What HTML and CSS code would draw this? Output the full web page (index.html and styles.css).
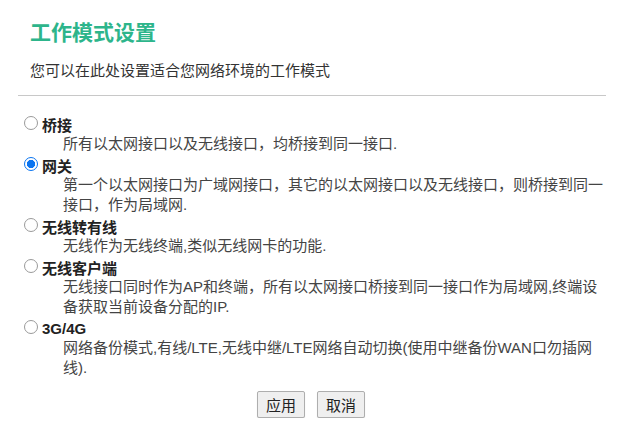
FILE: index.html
```html
<!DOCTYPE html>
<html lang="zh-CN">
<head>
<meta charset="utf-8">
<title>工作模式设置</title>
<link rel="stylesheet" href="styles.css">
</head>
<body>
<div class="page">
  <div class="head">
    <h1 class="title">工作模式设置</h1>
    <p class="subtitle">您可以在此处设置适合您网络环境的工作模式</p>
  </div>
  <hr class="rule">
  <form class="options">
    <div class="option">
      <label class="opt-label"><input type="radio" name="mode" class="radio"><span>桥接</span></label>
      <div class="desc">所有以太网接口以及无线接口，均桥接到同一接口.</div>
    </div>
    <div class="option">
      <label class="opt-label"><input type="radio" name="mode" class="radio" checked><span>网关</span></label>
      <div class="desc">第一个以太网接口为广域网接口，其它的以太网接口以及无线接口，则桥接到同一接口，作为局域网.</div>
    </div>
    <div class="option">
      <label class="opt-label"><input type="radio" name="mode" class="radio"><span>无线转有线</span></label>
      <div class="desc">无线作为无线终端,类似无线网卡的功能.</div>
    </div>
    <div class="option">
      <label class="opt-label"><input type="radio" name="mode" class="radio"><span>无线客户端</span></label>
      <div class="desc">无线接口同时作为AP和终端，所有以太网接口桥接到同一接口作为局域网,终端设备获取当前设备分配的IP.</div>
    </div>
    <div class="option">
      <label class="opt-label"><input type="radio" name="mode" class="radio"><span>3G/4G</span></label>
      <div class="desc">网络备份模式,有线/LTE,无线中继/LTE网络自动切换(使用中继备份WAN口勿插网线).</div>
    </div>
    <div class="actions">
      <button type="button" class="btn">应用</button>
      <button type="button" class="btn">取消</button>
    </div>
  </form>
</div>
</body>
</html>
```

FILE: styles.css
```css
html, body {
  margin: 0;
  padding: 0;
  background: #ffffff;
}

body {
  font-family: "Liberation Sans", "Noto Sans CJK SC", sans-serif;
  color: #333333;
}

.page {
  padding: 19px 34px 0 18px;
}

.head {
  padding-left: 12px;
}

.title {
  margin: 0;
  font-size: 21px;
  line-height: 28px;
  font-weight: bold;
  color: #2db58b;
}

.subtitle {
  margin: 12px 0 0 0;
  font-size: 15px;
  line-height: 24px;
  color: #333333;
}

.rule {
  margin: 12px 0 0 0;
  border: 0;
  border-top: 1px solid #c8c8c8;
  height: 0;
}

.options {
  margin: 18px 0 0 0;
  padding-right: 2px;
}

.option {
  margin-bottom: 1px;
}

.opt-label {
  display: flex;
  align-items: center;
  height: 20px;
  font-size: 15px;
  font-weight: bold;
  color: #222222;
}

.radio {
  appearance: none;
  -webkit-appearance: none;
  box-sizing: border-box;
  width: 14px;
  height: 14px;
  margin: 0 4px 3px 6px;
  flex: none;
  border: 1px solid #9a9a9a;
  border-radius: 50%;
  background: #ffffff;
}

.radio:checked {
  border: 1.5px solid #0a74f0;
  background: radial-gradient(circle, #0a74f0 0 3.9px, #ffffff 4.4px);
}

.desc {
  padding-left: 45px;
  font-size: 15px;
  line-height: 20px;
  color: #444444;
}

.actions {
  display: flex;
  justify-content: center;
  gap: 12px;
  margin-top: 13px;
}

.btn {
  height: 27px;
  width: 48px;
  padding: 0;
  font-family: "Liberation Sans", "Noto Sans CJK SC", sans-serif;
  font-size: 15px;
  color: #222222;
  background: #efefef;
  border: 1px solid #aeaeae;
  border-radius: 2px;
  box-shadow: 0 1px 1px rgba(0,0,0,0.12);
}
```
